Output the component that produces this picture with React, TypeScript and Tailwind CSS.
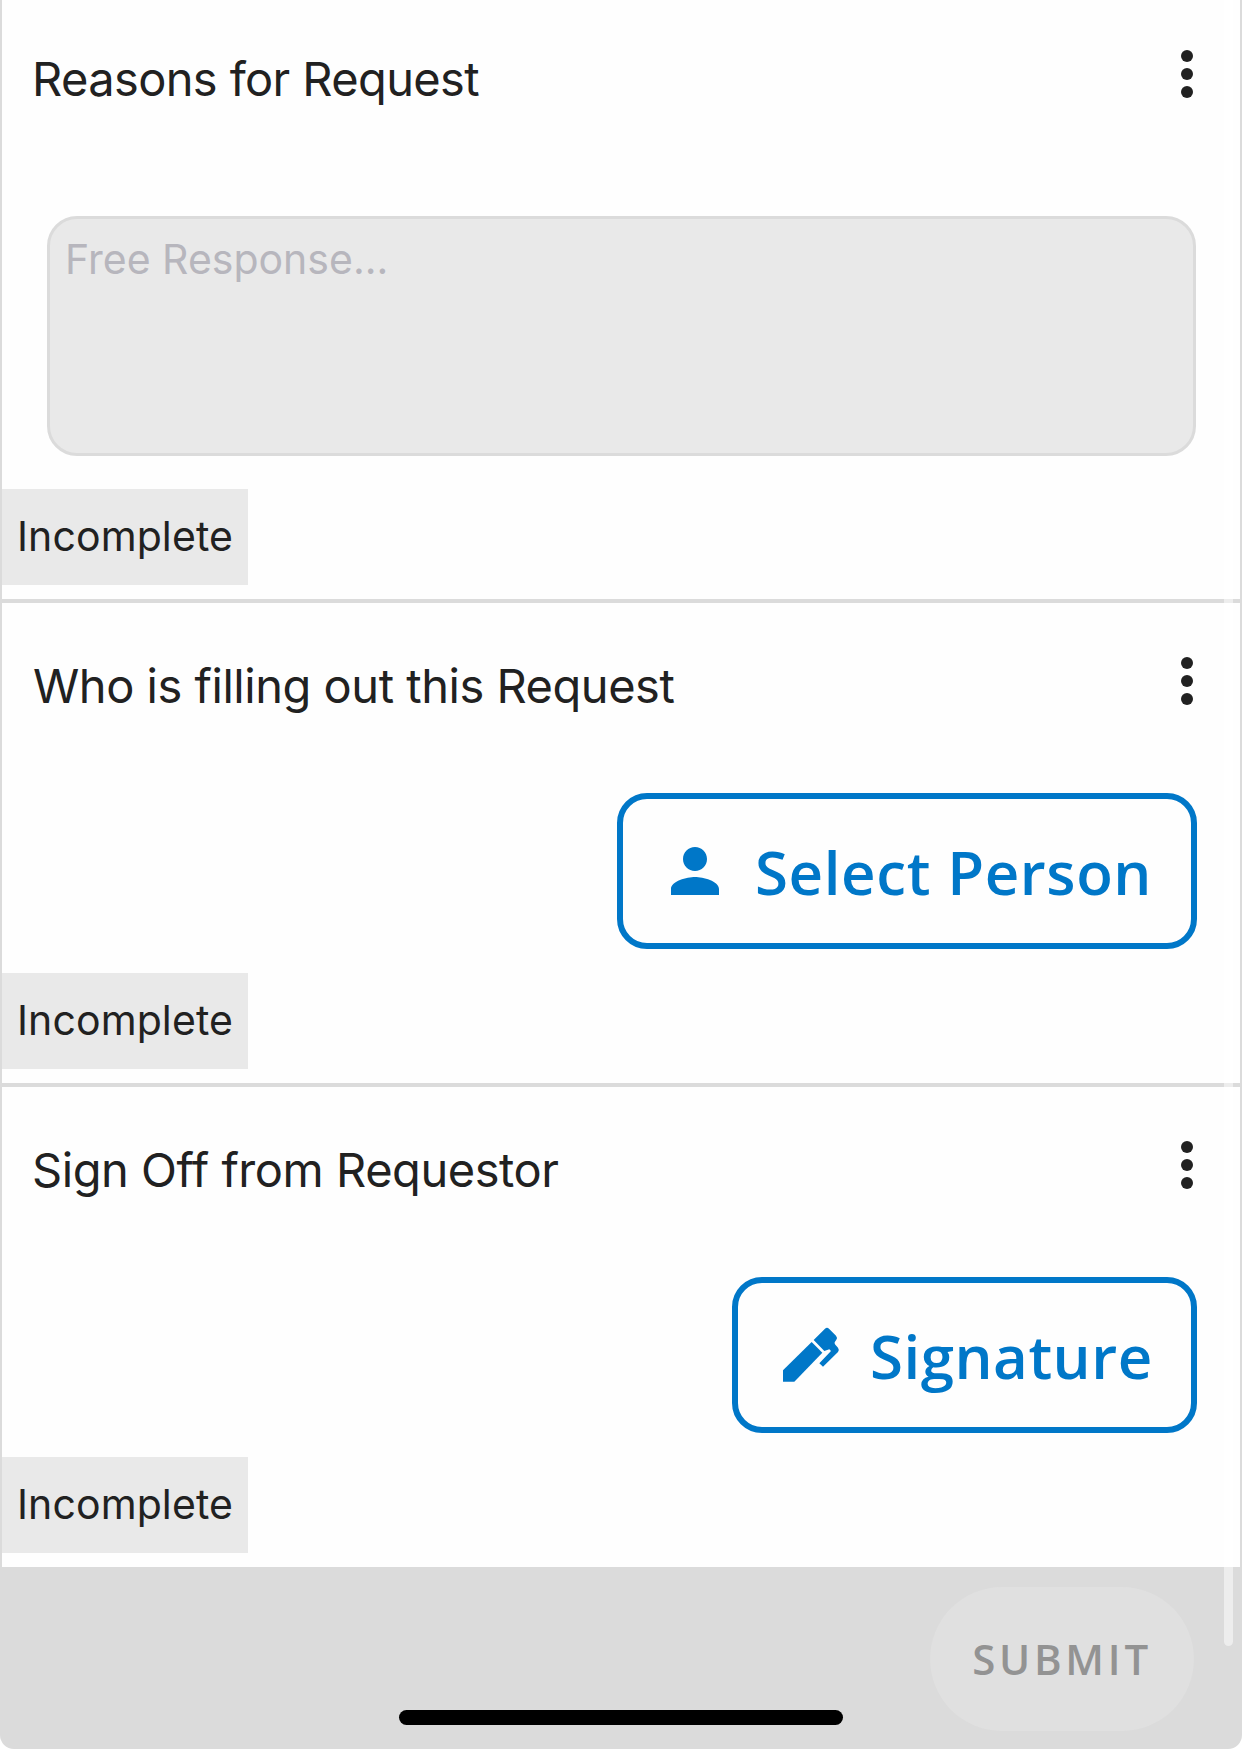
import type { ReactNode } from "react";

function MoreButton() {
  return (
    <button aria-label="More options" className="mr-[47px] mt-[54px] flex flex-col gap-1.5">
      <span className="size-3 rounded-full bg-[#212121]" />
      <span className="size-3 rounded-full bg-[#212121]" />
      <span className="size-3 rounded-full bg-[#212121]" />
    </button>
  );
}

function Section({ title, spacing, children }: { title: string; spacing: string; children: ReactNode }) {
  return (
    <section className="flex flex-col border-b-4 border-[#dbdbdb] pb-3.5">
      <header className="flex h-[130px] items-start justify-between">
        <h2 className={`mt-[53px] whitespace-nowrap text-[47px] leading-[60px] text-[#212121] ${spacing}`}>{title}</h2>
        <MoreButton />
      </header>
      {children}
      <div className="flex h-24 w-[246px] items-center bg-[#e9e9e9] pl-[15px] text-[41px] tracking-[0.1px] text-[#212121]">
        Incomplete
      </div>
    </section>
  );
}

function OutlineButton({ icon, label, sizing }: { icon: ReactNode; label: string; sizing: string }) {
  return (
    <button className={`mb-6 mr-[43px] mt-[60px] flex h-[156px] items-center self-end whitespace-nowrap rounded-[30px] border-6 border-[#0077c8] pl-9 font-['Open_Sans'] text-[60px] font-semibold leading-[80px] text-[#0077c8] ${sizing}`}>
      {icon}
      <span className="ml-6 pt-0.5">{label}</span>
    </button>
  );
}

function PersonIcon() {
  return (
    <svg viewBox="0 0 24 24" className="size-[72px] shrink-0 fill-current">
      <path d="M12 12c2.21 0 4-1.79 4-4s-1.79-4-4-4-4 1.79-4 4 1.79 4 4 4zm0 2c-2.67 0-8 1.34-8 4v2h16v-2c0-2.66-5.33-4-8-4z" />
    </svg>
  );
}

function PenIcon() {
  return (
    <svg viewBox="9 -26 216 216" className="size-[72px] shrink-0 fill-current">
      <path d="M36 162V128L122 43L154 75L70 162Z" />
      <path d="M128 37L162 3Q168 -2 174 3L195 24Q200 30 196 36L191 44Q190 48 193 51L201 60Q206 67 201 73L156 117L145 107L180 70L175 65L160 70Z" />
    </svg>
  );
}

export default function App() {
  return (
    <div className="relative h-[1749px] w-[1242px] overflow-hidden bg-white font-['Inter',sans-serif]">
      <div className="flex h-full flex-col overflow-hidden rounded-b-[14px] bg-[#dbdbdb]">
        <main className="mx-0.5 -mt-1 bg-[#fefefe]">
          <Section title="Reasons for Request" spacing="ml-[30px] tracking-[-0.62px]">
            <textarea
              placeholder="Free Response..."
              className="mb-[33px] ml-[45px] mt-[90px] h-60 w-[1149px] resize-none rounded-[30px] border-3 border-[#dbdbdb] bg-[#e9e9e9] px-[15px] py-[15px] text-[41px] leading-[50px] tracking-[0px] placeholder:text-[#b7b6bd]"
            />
          </Section>
          <Section title="Who is filling out this Request" spacing="ml-[31px] tracking-[-0.47px]">
            <OutlineButton icon={<PersonIcon />} label="Select Person" sizing="w-[580px] tracking-[0.6px]" />
          </Section>
          <Section title="Sign Off from Requestor" spacing="ml-[30px] tracking-[-0.45px]">
            <OutlineButton icon={<PenIcon />} label="Signature" sizing="w-[465px] tracking-[0.5px]" />
          </Section>
        </main>
        <footer className="flex justify-end pr-12 pt-4">
          <button className="h-36 w-[264px] rounded-full bg-[#e0e0e0] pb-0.5 font-['Open_Sans'] text-[42px] font-semibold tracking-[3.75px] text-[#939393]">
            SUBMIT
          </button>
        </footer>
      </div>
      <div className="absolute right-[9px] top-0 h-[1646px] w-[9px] rounded-b-full bg-white/50" />
      <div className="absolute bottom-6 left-[399px] h-[15px] w-[444px] rounded-full bg-black" />
    </div>
  );
}
